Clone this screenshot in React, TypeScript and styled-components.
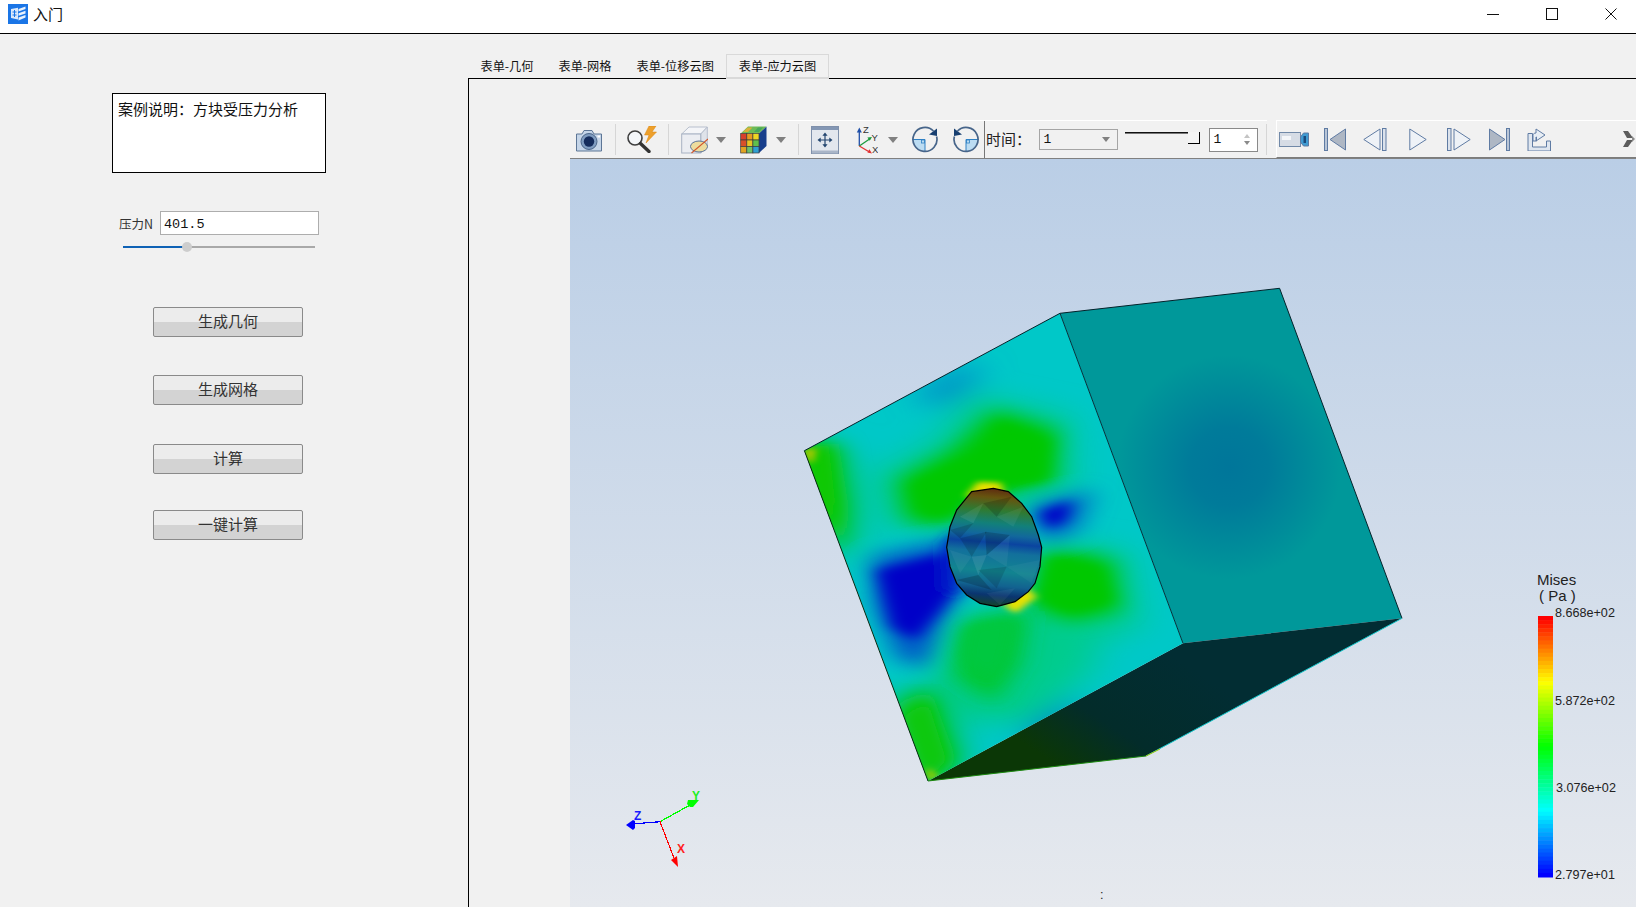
import React from "react";
import styled, { createGlobalStyle } from "styled-components";

const CJK = `"Noto Sans CJK SC", "Liberation Sans", sans-serif`;
const MONO = `"Liberation Mono", "Noto Sans CJK SC", monospace`;

const Global = createGlobalStyle`
  html, body {
    margin: 0;
    padding: 0;
    width: 1636px;
    height: 907px;
    overflow: hidden;
    background: #f1f1f1;
  }
  * { box-sizing: border-box; }
`;

const Page = styled.div`
  width: 1636px;
  height: 907px;
  display: flex;
  flex-direction: column;
  font-family: ${CJK};
  color: #111;
`;

const TitleBar = styled.div`
  flex: none;
  height: 34px;
  background: #fff;
  border-bottom: 1px solid #000;
  display: flex;
  align-items: center;
  padding: 0 19px 5px 8px;
`;

const TitleText = styled.span`
  font-size: 15px;
  line-height: 20px;
  margin-left: 5px;
`;

const WindowControls = styled.div`
  margin-left: auto;
  display: flex;
  align-items: center;
  gap: 47px;
`;

const Body = styled.div`
  flex: 1;
  display: flex;
  min-height: 0;
`;

const Side = styled.div`
  flex: none;
  width: 468px;
  padding-top: 59px;
  display: flex;
  flex-direction: column;
`;

const Note = styled.div`
  width: 214px;
  height: 80px;
  margin-left: 112px;
  background: #fff;
  border: 1px solid #000;
  padding: 4px 5px;
  font-size: 15px;
  line-height: 22px;
  white-space: nowrap;
`;

const ForceRow = styled.div`
  margin: 38px 0 0 119px;
  display: flex;
  align-items: center;
`;

const ForceLabel = styled.label`
  width: 41px;
  font-size: 12.5px;
  color: #333;
`;

const ForceInput = styled.input`
  width: 159px;
  height: 24px;
  background: #fff;
  border: 1px solid #adadad;
  border-radius: 0;
  outline: none;
  padding: 2px 3px 0;
  font-family: ${MONO};
  font-size: 13.5px;
  color: #111;
`;

const Slider = styled.div`
  position: relative;
  width: 192px;
  height: 2px;
  margin: 11px 0 0 123px;
  background: #a9a9a9;
`;

const SliderFill = styled.div`
  height: 100%;
  background: #0f62b5;
`;

const SliderKnob = styled.div`
  position: absolute;
  top: -4px;
  width: 10px;
  height: 10px;
  margin-left: -5px;
  border-radius: 50%;
  background: #cdcdcd;
`;

const ActionButton = styled.button<{ $top: number }>`
  display: block;
  width: 150px;
  height: 30px;
  margin: ${(p) => p.$top}px 0 0 153px;
  padding: 0 0 2px;
  border: 1px solid #8a8a8a;
  border-radius: 2px;
  background: linear-gradient(#ececec 50%, #d3d3d3 50%);
  font-family: ${CJK};
  font-size: 15px;
  line-height: 26px;
  color: #333;
`;

const Main = styled.div`
  flex: 1;
  min-width: 0;
  padding-top: 20px;
  display: flex;
  flex-direction: column;
`;

const Tabs = styled.div`
  flex: none;
  height: 24px;
  display: flex;
  position: relative;
  z-index: 1;
`;

const Tab = styled.div<{ $active?: boolean }>`
  height: ${(p) => (p.$active ? "25px" : "24px")};
  padding: 0 11.5px;
  font-size: 12.2px;
  line-height: 23px;
  white-space: nowrap;
  background: #f1f1f1;
  border: 1px solid ${(p) => (p.$active ? "#d9d9d9" : "transparent")};
  border-bottom-width: ${(p) => (p.$active ? "2px" : "1px")};
`;

const Pane = styled.div`
  flex: 1;
  min-height: 0;
  border-top: 1px solid #000;
  border-left: 1px solid #000;
  padding: 41px 0 0 101px;
  display: flex;
  flex-direction: column;
`;

const ToolbarRow = styled.div`
  flex: none;
  height: 39px;
  display: flex;
  border-bottom: 1px solid #808080;
`;

const ToolbarLeft = styled.div`
  flex: none;
  width: 697px;
  height: 38px;
  display: flex;
  align-items: center;
  border-top: 1px solid #fff;
`;

const ToolbarRight = styled.div`
  flex: 1;
  height: 38px;
  margin-left: 8.5px;
  display: flex;
  align-items: center;
  border-top: 1px solid #fff;
  border-left: 1px solid #fff;
  border-bottom: 1px solid #7c7c7c;
`;

const Icon = styled.svg<{ $ml?: number }>`
  flex: none;
  display: block;
  margin-left: ${(p) => p.$ml ?? 0}px;
`;

const Sep = styled.div<{ $ml: number }>`
  flex: none;
  width: 1px;
  height: 31px;
  margin-left: ${(p) => p.$ml}px;
  background: #d6d6d6;
`;

const DarkSep = styled.div<{ $ml: number }>`
  flex: none;
  width: 1px;
  align-self: stretch;
  margin-left: ${(p) => p.$ml}px;
  background: #777;
`;

const TimeLabel = styled.span`
  flex: none;
  width: 53.5px;
  font-size: 15px;
  line-height: 20px;
  margin-top: -2px;
  padding-left: 1px;
  white-space: nowrap;
  color: #222;
`;

const Combo = styled.div`
  flex: none;
  width: 79px;
  height: 21px;
  border: 1px solid #a5a5a5;
  display: flex;
  align-items: center;
  padding: 0 7px 0 4px;
  font-family: ${MONO};
  font-size: 13px;
`;

const ComboCaret = styled.span`
  margin-left: auto;
  width: 0;
  height: 0;
  border-left: 4px solid transparent;
  border-right: 4px solid transparent;
  border-top: 5px solid #808080;
`;

const TimeSlider = styled.div`
  flex: none;
  position: relative;
  width: 75px;
  height: 14px;
  margin-left: 7.5px;
  margin-top: -2px;
  display: flex;
  align-items: flex-start;
`;

const TimeLine = styled.div`
  width: 63px;
  height: 2px;
  background: linear-gradient(#111 50%, #777 50%);
`;

const TimeHandle = styled.div`
  width: 12px;
  height: 12px;
  background: #f4f4f4;
  border-right: 1px solid #000;
  border-bottom: 1px solid #000;
`;

const Spin = styled.div`
  flex: none;
  width: 49px;
  height: 24px;
  margin-left: 8.5px;
  background: #fff;
  border: 1px solid #8a8a8a;
  display: flex;
  align-items: center;
  padding: 0 7px 0 4px;
  font-family: ${MONO};
  font-size: 13px;
`;

const SpinArrows = styled.div`
  margin-left: auto;
  display: flex;
  flex-direction: column;
  gap: 3px;
`;

const SpinArrow = styled.span<{ $down?: boolean }>`
  width: 0;
  height: 0;
  border-left: 3px solid transparent;
  border-right: 3px solid transparent;
  border-${(p) => (p.$down ? "top" : "bottom")}: 4px solid ${(p) => (p.$down ? "#8a8a8a" : "#c4c4c4")};
`;

const Viewport = styled.div`
  flex: 1;
  min-height: 0;
  background: linear-gradient(#bacee6, #e6e9ee);
`;

const SceneSvg = styled.svg`
  display: block;
  width: 100%;
  height: 100%;
`;

const LegendTitle = styled.text`
  font-family: "Liberation Sans", sans-serif;
  font-size: 15px;
  fill: #222;
`;

const LegendTick = styled.text`
  font-family: "Liberation Sans", sans-serif;
  font-size: 12.6px;
  fill: #222;
`;

const AxisLabel = styled.text`
  font-family: "Liberation Sans", sans-serif;
  font-size: 12px;
  font-weight: bold;
`;

const SmallAxis = styled.text`
  font-family: "Liberation Sans", sans-serif;
  font-size: 9.5px;
  fill: #333;
`;

const AppIcon = () => (
  <svg width="20" height="20" viewBox="0 0 20 20" style={{ flex: "none" }}>
    <rect width="20" height="20" fill="#1a75e6" />
    <path d="M3 5l7-1.2V15.5L3 14z" fill="#dbe9fb" />
    <path d="M4.5 8h4M4.5 11h4M6.5 6v7" stroke="#1a75e6" strokeWidth="1" />
    <path d="M10.5 5l7-2.5v2.6l-7 2.4zM10.5 9.2l7-2.4v2.6l-7 2.4zM10.5 13.4l7-2.4v2.6l-7 2.9z" fill="#e9f2fd" />
  </svg>
);

const Caret = ({ ml }: { ml: number }) => (
  <Icon $ml={ml} width="10" height="6" viewBox="0 0 10 6">
    <path d="M0 0h10L5 6z" fill="#808080" />
  </Icon>
);

const RotateArt = () => (
  <>
    <path d="M13 13.5H1.5A11.5 11.5 0 0 0 13 25z" fill="#bcdcf2" />
    <path d="M1 13.5H13V25" stroke="#2f80c4" strokeWidth="1" fill="none" />
    <rect x="9.5" y="14" width="3" height="3" fill="none" stroke="#2f80c4" strokeWidth=".8" />
    <path d="M24.6 10.5A12 12 0 1 1 21.5 5" stroke="#47658a" strokeWidth="1.7" fill="none" />
    <path d="M17 8.5L25 2.5V10z" fill="#173f70" />
  </>
);

const LeftTools = () => (
  <ToolbarLeft>
    <Icon $ml={5} width="28" height="24" viewBox="0 0 28 24">
      <path d="M1.5 6H7l2-3.5h8L19 6h7.5v17h-25z" fill="#c5d5e8" stroke="#5d7696" strokeWidth="1" />
      <circle cx="14" cy="13.5" r="8" fill="#7f9cc0" stroke="#4b6689" />
      <circle cx="14" cy="13.5" r="5.2" fill="#142c5c" />
      <rect x="22.5" y="7.5" width="2.5" height="2" fill="#fff" />
    </Icon>
    <Sep $ml={12} />
    <Icon $ml={11} width="30" height="27" viewBox="0 0 30 27">
      <path d="M22 0h7l-4 6h4.5L19 17l3-8h-4.5z" fill="#eda02c" stroke="#d98412" strokeWidth=".5" />
      <circle cx="8" cy="12" r="7" fill="#f3f6f9" stroke="#3e3e3e" strokeWidth="1.6" />
      <path d="M13.5 17.5l8.5 8" stroke="#333" strokeWidth="3.4" strokeLinecap="round" />
    </Icon>
    <Sep $ml={10.5} />
    <Icon $ml={12} width="27" height="28" viewBox="0 0 27 28">
      <path d="M.7 8L8 1h18.3l-6.5 7z" fill="#f4f5f8" stroke="#b7bfcd" />
      <path d="M19.8 8l6.5-7v19.5L19.8 27z" fill="#dfe3ea" stroke="#b7bfcd" />
      <rect x=".7" y="8" width="19" height="19" fill="#ebedf2" stroke="#a8b2c3" />
      <ellipse cx="18" cy="20.5" rx="8.5" ry="5.5" fill="#ecdc9e" stroke="#5b7499" />
      <path d="M10.5 27L27 13" stroke="#d2572a" strokeWidth="1.1" />
    </Icon>
    <Caret ml={8} />
    <Icon $ml={14} width="27" height="28" viewBox="0 0 27 28">
      <path d="M.7 7.5L8 .5h18.5l-7.5 7z" fill="#6dbb57" />
      <path d="M19 7.5l7.5-7v19.5L19 27z" fill="#183f8c" />
      <path d="M3 6l4.5-4.5h5L8 6z" fill="#d9b13a" />
      <path d="M14 6l4-4.5h5L19 6z" fill="#47a85a" />
      {[
        ["#d8402c", "#e89a20", "#eed524"],
        ["#d8502a", "#e8c424", "#5fc04c"],
        ["#e2a422", "#6cc26a", "#2f9fd2"],
      ].map((row, r) =>
        row.map((c, i) => <rect key={`${r}${i}`} x={0.7 + i * 6.1} y={7.5 + r * 6.5} width="6.1" height="6.5" fill={c} stroke="#3c3c3c" strokeWidth=".7" />)
      )}
    </Icon>
    <Caret ml={9} />
    <Sep $ml={12} />
    <Icon $ml={12} width="28" height="28" viewBox="0 0 28 28">
      <rect x=".5" y=".5" width="27" height="27" fill="#e3e7ee" stroke="#7f90ab" />
      <rect x="1" y="1" width="26" height="3" fill="#8497b4" />
      <rect x="1" y="24.5" width="26" height="3" fill="#a9b5c7" />
      <path d="M14 9v10M9 14h10" stroke="#23456f" strokeWidth="1.2" />
      <path d="M14 6.5l2.6 3.2h-5.2zM14 21.5l2.6-3.2h-5.2zM6.5 14l3.2-2.6v5.2zM21.5 14l-3.2-2.6v5.2z" fill="#23456f" />
    </Icon>
    <Icon $ml={17} width="22" height="28" viewBox="0 0 22 28">
      <path d="M3.3 20V5" stroke="#1f4fa8" strokeWidth="1.3" />
      <path d="M3.3 1.5l2.5 5h-5z" fill="#1f4fa8" />
      <path d="M3.3 20l11-7.5" stroke="#1c9a3c" strokeWidth="1.3" />
      <path d="M16 11l-4.6.4 2.3 3.4z" fill="#1c9a3c" />
      <path d="M3.3 20l11 6.5" stroke="#e23232" strokeWidth="1.3" />
      <path d="M16 27.5l-2.6-4.2-2 3.2z" fill="#e23232" />
      <SmallAxis x="7" y="7">Z</SmallAxis>
      <SmallAxis x="15.5" y="14.5">Y</SmallAxis>
      <SmallAxis x="16" y="27">X</SmallAxis>
    </Icon>
    <Caret ml={10} />
    <Icon $ml={14.5} width="26" height="27" viewBox="0 0 26 27">
      <RotateArt />
    </Icon>
    <Icon $ml={15} width="26" height="27" viewBox="0 0 26 27">
      <g transform="translate(26 0) scale(-1 1)">
        <RotateArt />
      </g>
    </Icon>
    <DarkSep $ml={5} />
    <TimeLabel>时间：</TimeLabel>
    <Combo>
      1<ComboCaret />
    </Combo>
    <TimeSlider>
      <TimeLine />
      <TimeHandle />
    </TimeSlider>
    <Spin>
      1
      <SpinArrows>
        <SpinArrow />
        <SpinArrow $down />
      </SpinArrows>
    </Spin>
    <Sep $ml={8} />
  </ToolbarLeft>
);

const STROKE = "#5f7ba3";

const RightTools = () => (
  <ToolbarRight>
    <Icon $ml={2} width="30" height="15" viewBox="0 0 30 15">
      <rect x=".5" y=".5" width="21" height="14" fill="#d6dce5" stroke="#7189a8" />
      <rect x="3" y="4" width="9" height="4" fill="#f4f6f9" />
      <path d="M21.5 5l3-4h5v13h-5l-3-4z" fill="#3f9bd2" stroke="#5f7ba3" />
      <rect x="24.5" y="4" width="2.5" height="7" fill="#1a4a7c" />
    </Icon>
    <Icon $ml={15} width="22" height="23" viewBox="0 0 22 23">
      <rect x=".5" y=".5" width="3" height="22" fill="#b9c5d6" stroke={STROKE} />
      <path d="M6 11.5L21.5 1v21z" fill="#aeb7c4" stroke={STROKE} />
    </Icon>
    <Icon $ml={17.5} width="24" height="23" viewBox="0 0 24 23">
      <path d="M.8 11.5L17 1v21z" fill="#eef2f7" stroke={STROKE} />
      <rect x="19.5" y=".5" width="3.5" height="22" fill="#dbe2ec" stroke={STROKE} />
    </Icon>
    <Icon $ml={21.5} width="18" height="23" viewBox="0 0 18 23">
      <path d="M17.2 11.5L.8 1v21z" fill="#eef2f7" stroke={STROKE} />
    </Icon>
    <Icon $ml={20} width="24" height="23" viewBox="0 0 24 23">
      <rect x=".5" y=".5" width="3.5" height="22" fill="#dbe2ec" stroke={STROKE} />
      <path d="M23.2 11.5L7 1v21z" fill="#eef2f7" stroke={STROKE} />
    </Icon>
    <Icon $ml={18} width="21" height="23" viewBox="0 0 21 23">
      <path d="M16 11.5L.5 1v21z" fill="#aeb7c4" stroke={STROKE} />
      <rect x="17.5" y=".5" width="3" height="22" fill="#b9c5d6" stroke={STROKE} />
    </Icon>
    <Icon $ml={17.5} width="24" height="23" viewBox="0 0 24 23">
      <path d="M1 5.5h4.5V19h14v-6h4v10H1z" fill="#dfe6ef" stroke={STROKE} />
      <path d="M6 13V7.5C6 6 7 5 9 5h0V1l9 6-9 6V9H9.5v4z" fill="#e8eef5" stroke={STROKE} />
    </Icon>
    <Icon $ml={71.5} width="12" height="18" viewBox="0 0 12 18">
      <path d="M0 1h5l5 7H4zM0 17h5l5-7H4z" fill="#5c5c5c" />
      <path d="M9 6l3 3-3 3z" fill="#8a8a8a" />
    </Icon>
  </ToolbarRight>
);

// corners of the cube, page coordinates
const A = "1060,313.3";
const B = "1279.6,288.3";
const C = "1402,618.3";
const D = "1183,643.3";
const E = "804.4,450.7";
const F = "928,781";
const G = "1146,756";

// 64 bands, red at the top to blue at the bottom
const LEGEND = Array.from({ length: 64 }, (_, i) => ({
  y: 616 + i * (261 / 64),
  color: `hsl(${(i / 63) * 240}, 100%, 50%)`,
}));

const HOLE = "280,85 325,95 365,130 395,170 415,225 425,262 420,320 405,370 385,395 345,425 290,440 240,430 200,405 170,370 150,320 140,262 150,200 170,150 215,95";

const FACETS = [
  ["180,235 260,215 215,290", "#000", 0.14],
  ["255,215 330,225 260,285", "#000", 0.18],
  ["150,270 215,290 180,340", "#fff", 0.05],
  ["215,290 260,285 235,345", "#fff", 0.09],
  ["260,285 330,225 320,320", "#fff", 0.05],
  ["235,330 320,320 290,385", "#000", 0.12],
  ["320,320 420,300 395,370", "#fff", 0.04],
  ["170,360 235,345 275,390", "#000", 0.18],
  ["180,170 250,130 220,190", "#fff", 0.08],
  ["250,130 335,110 290,170", "#000", 0.16],
  ["290,170 370,140 340,200", "#fff", 0.06],
  ["150,210 220,190 180,235", "#000", 0.14],
  ["260,400 345,385 300,435", "#fff", 0.05],
] as const;

const Scene = () => (
  <SceneSvg viewBox="570 159 1066 748" shapeRendering="geometricPrecision">
    <defs>
      <filter id="wide" x="-80%" y="-80%" width="260%" height="260%">
        <feGaussianBlur stdDeviation="46 36" />
      </filter>
      <filter id="soft" x="-80%" y="-80%" width="260%" height="260%">
        <feGaussianBlur stdDeviation="32 25" />
      </filter>
      <filter id="tight" x="-80%" y="-80%" width="260%" height="260%">
        <feGaussianBlur stdDeviation="20 15" />
      </filter>
      <filter id="fine" x="-80%" y="-80%" width="260%" height="260%">
        <feGaussianBlur stdDeviation="10 8" />
      </filter>
      <clipPath id="frontClip">
        <polygon points={`${E} ${A} ${D} ${F}`} />
      </clipPath>
      <clipPath id="holeClip">
        <polygon points={HOLE} />
      </clipPath>
      <radialGradient id="rightGlow" gradientUnits="userSpaceOnUse" cx="1229" cy="467" r="112">
        <stop offset="0" stopColor="#00769a" />
        <stop offset=".35" stopColor="#007b9a" />
        <stop offset="1" stopColor="#00989a" />
      </radialGradient>
      <linearGradient id="underside" gradientUnits="userSpaceOnUse" x1="1180" y1="660" x2="1095" y2="790">
        <stop offset="0" stopColor="#022d33" />
        <stop offset=".6" stopColor="#032c2a" />
        <stop offset="1" stopColor="#0b3706" />
      </linearGradient>
      <linearGradient id="holeBands" gradientUnits="userSpaceOnUse" x1="300" y1="85" x2="270" y2="440">
        <stop offset="0" stopColor="#5e2810" />
        <stop offset=".08" stopColor="#66540f" />
        <stop offset=".19" stopColor="#2f7a32" />
        <stop offset=".3" stopColor="#12807a" />
        <stop offset=".39" stopColor="#12689c" />
        <stop offset=".46" stopColor="#0a44a0" />
        <stop offset=".54" stopColor="#12709c" />
        <stop offset=".7" stopColor="#128490" />
        <stop offset=".82" stopColor="#126290" />
        <stop offset=".9" stopColor="#0a3570" />
        <stop offset="1" stopColor="#154526" />
      </linearGradient>
    </defs>

    <polygon points={`${A} ${B} ${C} ${D}`} fill="url(#rightGlow)" />
    <polygon points={`${D} ${C} ${G} ${F}`} fill="url(#underside)" />
    <polygon points={`${E} ${A} ${D} ${F}`} fill="#00c8c8" />

    <g clipPath="url(#frontClip)">
      {/* stress field of the front face, drawn in the coordinates of a 2.376 x 3 crop */}
      <g transform="translate(780 280) scale(.4209 .3333)">
        <g filter="url(#wide)">
          <polygon points="450,340 690,400 700,630 570,700 440,720 370,760 260,740 220,580 370,480" fill="#00cc90" />
          <polygon points="600,770 830,810 860,1040 710,1110 580,1020" fill="#00cc90" />
          <polygon points="400,990 640,970 760,1140 600,1330 400,1320 350,1130" fill="#00cc8c" />
          <polygon points="30,490 170,500 220,730 190,870 100,810" fill="#00c8a0" />
          <polygon points="250,1240 400,1210 450,1450 340,1540" fill="#00c888" />
          <polygon points="330,350 470,240 450,320 370,380" fill="#0070c8" />
          <polygon points="590,1350 720,1240 680,1340 610,1410" fill="#0060c8" />
        </g>
        <g filter="url(#soft)">
          <polygon points="215,830 400,780 430,930 390,1010 345,1160 280,1140 225,980" fill="#0058c8" />
          <polygon points="600,670 750,630 710,750 640,790 600,750" fill="#0070c8" />
          <polygon points="510,390 660,450 650,610 530,640 440,670 400,740 300,720 280,600 410,510" fill="#00c800" />
          <polygon points="630,800 790,840 810,990 690,1025 600,975" fill="#00c800" />
          <polygon points="430,1030 590,990 570,1150 510,1270 410,1190" fill="#00c830" />
          <polygon points="30,490 140,490 165,690 150,820 90,740" fill="#08c800" />
          <polygon points="270,1280 355,1220 420,1440 345,1530" fill="#10c808" />
        </g>
        <g filter="url(#tight)">
          <polygon points="520,420 640,480 630,600 530,620 450,640 410,710 340,700 315,610 420,550 500,520" fill="#00c800" />
          <polygon points="645,830 760,860 785,965 690,995 615,960" fill="#00c800" />
          <polygon points="445,1040 565,1010 540,1140 495,1200 430,1130" fill="#00c840" />
          <polygon points="50,505 115,495 130,660 125,750 95,700" fill="#10c800" />
          <polygon points="295,1310 350,1260 395,1440 345,1510" fill="#10c808" />
          <polygon points="230,870 385,820 430,900 385,985 320,1080 265,1040" fill="#0000c8" />
          <polygon points="615,695 695,660 680,720 640,750" fill="#0000c8" />
          <polygon points="385,790 425,745 445,800 425,950 390,930" fill="#0020c8" />
        </g>
        <g filter="url(#fine)">
          <polygon points="440,650 470,605 525,608 535,655" fill="#e8e000" />
          <polygon points="530,975 585,920 610,950 560,1000" fill="#e8e000" />
          <polygon points="58,510 85,505 78,545 68,550" fill="#c8c800" />
          <polygon points="352,1505 350,1460 375,1490" fill="#b8c800" />
        </g>
      </g>
    </g>

    <g transform="translate(900 460) scale(.33333)">
      <polygon points={HOLE} fill="url(#holeBands)" />
      <g clipPath="url(#holeClip)">
        {FACETS.map(([points, fill, opacity]) => (
          <polygon key={points} points={points} fill={fill} opacity={opacity} />
        ))}
      </g>
      <polygon points={HOLE} fill="none" stroke="#000" strokeWidth="3.6" />
    </g>

    <polyline points={`${E} ${A} ${B} ${C}`} fill="none" stroke="#03222a" strokeWidth="1" />
    <line x1="1060" y1="313.3" x2="1183" y2="643.3" stroke="#03303a" strokeWidth="1" />
    <line x1="804.4" y1="450.7" x2="928" y2="781" stroke="#0a2a10" strokeWidth="1" />
    <line x1="1402" y1="618.3" x2="1146" y2="756" stroke="#10c4c8" strokeWidth="1" />
    <line x1="1146" y1="756" x2="928" y2="781" stroke="#1c8a10" strokeWidth="1" />
    <line x1="1146" y1="756" x2="1160" y2="749" stroke="#a8c800" strokeWidth="1" />

    {LEGEND.map((band) => (
      <rect key={band.y} x="1538" y={band.y} width="15" height={261 / 64 + 0.5} fill={band.color} />
    ))}
    <LegendTitle x="1537" y="585">Mises</LegendTitle>
    <LegendTitle x="1539" y="601">( Pa )</LegendTitle>
    <LegendTick x="1555" y="617">8.668e+02</LegendTick>
    <LegendTick x="1555" y="705">5.872e+02</LegendTick>
    <LegendTick x="1556" y="792">3.076e+02</LegendTick>
    <LegendTick x="1555" y="879">2.797e+01</LegendTick>

    <g shapeRendering="crispEdges" strokeWidth="1.2">
      <line x1="660" y1="821.7" x2="632" y2="824" stroke="#0000ff" />
      <line x1="660" y1="821.7" x2="690" y2="805" stroke="#00ff00" />
      <line x1="660" y1="821.7" x2="674" y2="858" stroke="#ff0000" />
    </g>
    <path d="M626 825l7-5 2 1v7l-2 2z" fill="#0000ff" />
    <path d="M688 800h11l-6 7h-3l-3-3z" fill="#00ff00" />
    <path d="M671 860l6-4 1 11z" fill="#ff0000" />
    <AxisLabel x="634" y="820" fill="#1a1aff">Z</AxisLabel>
    <AxisLabel x="692" y="800" fill="#22ee22">Y</AxisLabel>
    <AxisLabel x="677" y="853" fill="#ff2020">X</AxisLabel>

    <LegendTick x="1100" y="899">:</LegendTick>
  </SceneSvg>
);

export default function App() {
  return (
    <Page>
      <Global />
      <TitleBar>
        <AppIcon />
        <TitleText>入门</TitleText>
        <WindowControls>
          <svg width="12" height="12" viewBox="0 0 12 12">
            <path d="M0 6.5h12" stroke="#111" />
          </svg>
          <svg width="12" height="12" viewBox="0 0 12 12">
            <rect x=".5" y=".5" width="11" height="11" fill="none" stroke="#111" />
          </svg>
          <svg width="12" height="12" viewBox="0 0 12 12">
            <path d="M.5.5l11 11M11.5.5l-11 11" stroke="#111" />
          </svg>
        </WindowControls>
      </TitleBar>
      <Body>
        <Side>
          <Note>案例说明：方块受压力分析</Note>
          <ForceRow>
            <ForceLabel>压力N</ForceLabel>
            <ForceInput readOnly value="401.5" />
          </ForceRow>
          <Slider>
            <SliderFill style={{ width: "33.3%" }} />
            <SliderKnob style={{ left: "33.3%" }} />
          </Slider>
          <ActionButton $top={59}>生成几何</ActionButton>
          <ActionButton $top={38}>生成网格</ActionButton>
          <ActionButton $top={39}>计算</ActionButton>
          <ActionButton $top={36}>一键计算</ActionButton>
        </Side>
        <Main>
          <Tabs>
            <Tab>表单-几何</Tab>
            <Tab>表单-网格</Tab>
            <Tab>表单-位移云图</Tab>
            <Tab $active>表单-应力云图</Tab>
          </Tabs>
          <Pane>
            <ToolbarRow>
              <LeftTools />
              <RightTools />
            </ToolbarRow>
            <Viewport>
              <Scene />
            </Viewport>
          </Pane>
        </Main>
      </Body>
    </Page>
  );
}
